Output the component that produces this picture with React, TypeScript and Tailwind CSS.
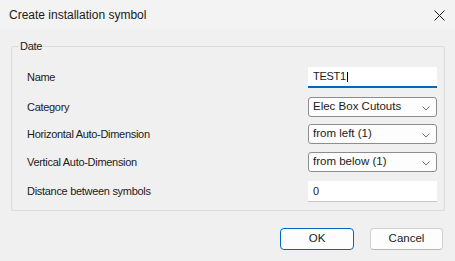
import React from "react";

const Chevron = () => (
  <svg width="8" height="5" viewBox="0 0 8 5" className="absolute right-[6px] top-[8px]">
    <path d="M0.5 0.5 L4 4 L7.5 0.5" fill="none" stroke="#6e6e6e" strokeWidth="1" />
  </svg>
);

const Select = ({ value }: { value: string }) => (
  <div className="relative w-[129px] h-[20px] bg-[#fdfdfd] border border-[#8d8d8d] rounded-[3px] flex items-center pl-[4px] text-[11.5px] tracking-normal text-[#1b1b1b]">
    <span>{value}</span>
    <Chevron />
  </div>
);

const Label = ({ children }: { children: React.ReactNode }) => (
  <div className="w-[281px] shrink-0 text-[#1b1b1b]">{children}</div>
);

export default function App() {
  return (
    <div
      className="w-[455px] h-[261px] bg-[#f0f0f0] flex flex-col text-[11px] tracking-[-0.3px] overflow-hidden"
      style={{ fontFamily: '"Liberation Sans", Arial, sans-serif' }}
    >
      <div className="h-[30px] bg-[#f3f3f3] flex items-center justify-between pl-[9px] pr-[10px] shrink-0">
        <span className="text-[12px] tracking-normal text-[#1a1a1a]">Create installation symbol</span>
        <svg width="11" height="11" viewBox="0 0 11 11">
          <path d="M0.5 0.5 L10.5 10.5 M10.5 0.5 L0.5 10.5" stroke="#1a1a1a" strokeWidth="1" fill="none" />
        </svg>
      </div>

      <div className="relative ml-[11px] mt-[16px] w-[434px] h-[165px] border border-[#dcdcdc] rounded-[2px] pt-[20px] pl-[15px] flex flex-col">
        <span className="absolute left-[7px] top-[-8px] px-[1px] bg-[#f0f0f0] text-[#1b1b1b] leading-[14px]">Date</span>

        <div className="flex items-center h-[21px]">
          <Label>Name</Label>
          <div className="w-[129px] h-[21px] bg-white border-b-2 border-[#0067c0] flex items-center pl-[5px] text-[#1b1b1b]">
            <span>TEST1</span>
            <span className="w-[1px] h-[10px] bg-black ml-[1px]" />
          </div>
        </div>

        <div className="flex items-center h-[20px] mt-[9px]">
          <Label>Category</Label>
          <Select value="Elec Box Cutouts" />
        </div>

        <div className="flex items-center h-[20px] mt-[7px]">
          <Label>Horizontal Auto-Dimension</Label>
          <Select value="from left (1)" />
        </div>

        <div className="flex items-center h-[20px] mt-[8px]">
          <Label>Vertical Auto-Dimension</Label>
          <Select value="from below (1)" />
        </div>

        <div className="flex items-center h-[21px] mt-[9px]">
          <Label>Distance between symbols</Label>
          <div className="w-[129px] h-[21px] bg-white border-b border-[#c8c8c8] flex items-center pl-[5px] text-[#1b1b1b]">
            0
          </div>
        </div>
      </div>

      <div className="flex justify-end gap-[16px] mt-[17px] pr-[12px]">
        <button className="w-[74px] h-[22px] bg-[#fdfdfd] border border-[#0067c0] rounded-[4px] text-[#1b1b1b] text-[11.5px] tracking-normal flex items-center justify-center">
          OK
        </button>
        <button className="w-[73px] h-[22px] bg-[#fdfdfd] border border-[#d0d0d0] border-b-[#b8b8b8] rounded-[4px] text-[#1b1b1b] text-[11.5px] tracking-normal flex items-center justify-center">
          Cancel
        </button>
      </div>
    </div>
  );
}
